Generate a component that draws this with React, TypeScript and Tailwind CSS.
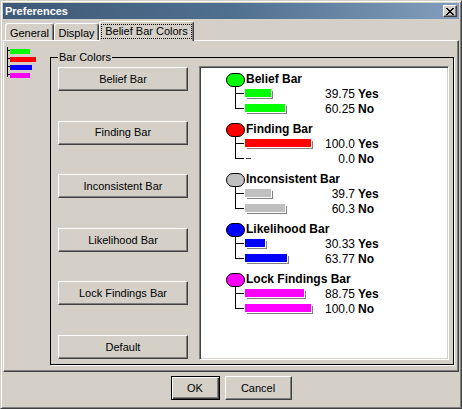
import React from 'react';

const GROUPS = [
  {
    name: 'Belief Bar',
    fill: 'bg-[#00ff00]',
    rows: [
      { value: '39.75', pct: 39.75, label: 'Yes' },
      { value: '60.25', pct: 60.25, label: 'No' },
    ],
  },
  {
    name: 'Finding Bar',
    fill: 'bg-[#ff0000]',
    rows: [
      { value: '100.0', pct: 100, label: 'Yes' },
      { value: '0.0', pct: 0, label: 'No' },
    ],
  },
  {
    name: 'Inconsistent Bar',
    fill: 'bg-[#c0c0c0]',
    rows: [
      { value: '39.7', pct: 39.7, label: 'Yes' },
      { value: '60.3', pct: 60.3, label: 'No' },
    ],
  },
  {
    name: 'Likelihood Bar',
    fill: 'bg-[#0000ff]',
    rows: [
      { value: '30.33', pct: 30.33, label: 'Yes' },
      { value: '63.77', pct: 63.77, label: 'No' },
    ],
  },
  {
    name: 'Lock Findings Bar',
    fill: 'bg-[#ff00ff]',
    rows: [
      { value: '88.75', pct: 88.75, label: 'Yes' },
      { value: '100.0', pct: 100, label: 'No' },
    ],
  },
];

const BUTTONS = ['Belief Bar', 'Finding Bar', 'Inconsistent Bar', 'Likelihood Bar', 'Lock Findings Bar', 'Default'];

const raised =
  'bg-[#d4d0c8] border border-t-white border-l-white border-r-[#404040] border-b-[#404040] shadow-[inset_-1px_-1px_0_#808080]';

function CloseGlyph() {
  return (
    <svg width="8" height="7" viewBox="0 0 8 7" shapeRendering="crispEdges">
      <path
        fill="#000"
        d="M0 0h2v1H0z M6 0h2v1H6z M1 1h2v1H1z M5 1h2v1H5z M2 2h4v1H2z M3 3h2v1H3z M2 4h4v1H2z M1 5h2v1H1z M5 5h2v1H5z M0 6h2v1H0z M6 6h2v1H6z"
      />
    </svg>
  );
}

function TreeIcon() {
  return (
    <svg width="34" height="36" className="ml-px mt-[4px]" shapeRendering="crispEdges">
      <line x1="2.5" y1="2" x2="2.5" y2="32" stroke="#000" />
      {[5.5, 13.5, 21.5, 29.5].map((y) => (
        <line key={y} x1="2" y1={y} x2="5" y2={y} stroke="#000" />
      ))}
      <rect x="5" y="4" width="20" height="5" fill="#00ff00" />
      <rect x="5" y="12" width="26" height="5" fill="#ff0000" />
      <rect x="5" y="20" width="22" height="5" fill="#0000ff" />
      <rect x="5" y="28" width="20" height="5" fill="#ff00ff" />
    </svg>
  );
}

function BarRow({ row, fill, last }: { row: { value: string; pct: number; label: string }; fill: string; last: boolean }) {
  return (
    <div className="flex h-[15px] items-stretch pl-[9px] leading-[15px]">
      <svg width="10" height="15" className="shrink-0" shapeRendering="crispEdges">
        <line x1="0.5" y1="0" x2="0.5" y2={last ? 6.5 : 15} stroke="#000" />
        <line x1="0" y1="6.5" x2="9" y2="6.5" stroke="#000" />
      </svg>
      <div className="w-[78px] shrink-0 pt-[2px]">
        {row.pct > 0 ? (
          <div
            className={`h-[8px] ${fill} shadow-[1px_1px_0_#fff,2px_2px_0_#808080]`}
            style={{ width: Math.round(row.pct * 0.66) }}
          />
        ) : (
          <div className="ml-px mt-[4px] h-px w-[5px] bg-[#404040]" />
        )}
      </div>
      <span className="w-[32px] shrink-0 text-right">{row.value}</span>
      <span className="ml-[3px] font-bold">{row.label}</span>
    </div>
  );
}

export default function App() {
  return (
    <div className="flex h-[409px] w-[462px] flex-col border border-t-[#d4d0c8] border-l-[#d4d0c8] border-r-[#404040] border-b-[#404040] bg-[#d4d0c8] p-[2px] font-['Liberation_Sans',Arial,sans-serif] text-black shadow-[inset_1px_1px_0_#fff,inset_-1px_-1px_0_#808080]">
      {/* Title bar */}
      <div className="flex h-[16px] shrink-0 items-center justify-between bg-linear-to-r from-[#3d5a78] via-[#50708f] to-[#829ebc] pl-[2px]">
        <span className="text-[11px] font-bold leading-none text-white">Preferences</span>
        <button className={`mr-[2px] flex h-[12px] w-[14px] items-center justify-center ${raised}`}>
          <CloseGlyph />
        </button>
      </div>

      {/* Tabs */}
      <div className="flex h-[21px] shrink-0 items-end pl-[2px] text-[11px] leading-[13px]">
        <div className="flex h-[17px] w-[49px] justify-center rounded-t-[3px] border-l border-t border-r border-l-white border-t-white border-r-[#404040] pt-[3px] shadow-[inset_-1px_0_0_#808080]">
          General
        </div>
        <div className="flex h-[17px] w-[45px] justify-center rounded-t-[3px] border-l border-t border-r border-l-white border-t-white border-r-[#404040] pt-[3px] shadow-[inset_-1px_0_0_#808080]">
          Display
        </div>
        <div className="relative z-10 -mb-px flex h-[20px] w-[95px] justify-center rounded-t-[3px] border-l border-t border-r border-l-white border-t-white border-r-[#404040] bg-[#d4d0c8] pt-[2px] shadow-[inset_-1px_0_0_#808080]">
          <span className="h-[15px] border border-dotted border-black px-[3px]">Belief Bar Colors</span>
        </div>
      </div>

      {/* Tab panel */}
      <div className="flex h-[332px] shrink-0 border border-t-white border-l-white border-r-[#404040] border-b-[#404040] shadow-[inset_-1px_-1px_0_#808080]">
        <div className="w-[46px] shrink-0">
          <TreeIcon />
        </div>

        <fieldset className="mb-[6px] mr-[4px] mt-[10px] flex min-w-0 flex-1 flex-col border border-black pb-[4px] pl-[7px] pr-[4px] shadow-[1px_1px_0_#fff]">
          <legend className="px-px text-[11px] leading-[13px]">Bar Colors</legend>
          <div className="flex min-h-0 flex-1 pt-[2px]">
            <div className="my-px mr-[11px] flex w-[130px] shrink-0 flex-col justify-between">
              {BUTTONS.map((b) => (
                <button key={b} className={`h-[24px] w-full text-[11px] ${raised}`}>
                  {b}
                </button>
              ))}
            </div>

            <div className="flex-1 border border-t-[#808080] border-l-[#808080] border-r-white border-b-white bg-white pl-[26px] pt-[5px] text-[12px] shadow-[inset_1px_1px_0_#404040,inset_-1px_-1px_0_#d4d0c8]">
              {GROUPS.map((g) => (
                <div key={g.name} className="h-[50px]">
                  <div className="flex h-[15px] items-center">
                    <span className={`h-[14px] w-[19px] shrink-0 rounded-full border border-black ${g.fill}`} />
                    <span className="ml-px font-bold leading-[15px]">{g.name}</span>
                  </div>
                  {g.rows.map((r, i) => (
                    <BarRow key={i} row={r} fill={g.fill} last={i === g.rows.length - 1} />
                  ))}
                </div>
              ))}
            </div>
          </div>
        </fieldset>
      </div>

      {/* Dialog buttons */}
      <div className="flex flex-1 justify-center gap-[5px] pt-[4px] text-[11px]">
        <button className="h-[24px] w-[49px] border border-black bg-[#d4d0c8] shadow-[inset_1px_1px_0_#fff,inset_-1px_-1px_0_#404040,inset_-2px_-2px_0_#808080]">
          OK
        </button>
        <button className={`h-[24px] w-[67px] ${raised}`}>Cancel</button>
      </div>
    </div>
  );
}
